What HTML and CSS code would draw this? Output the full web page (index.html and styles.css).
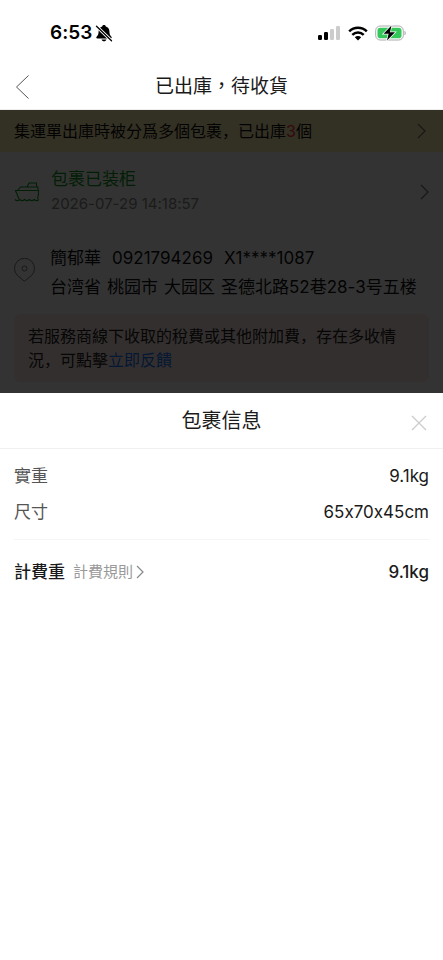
FILE: index.html
```html
<!DOCTYPE html>
<html lang="zh-Hans">
<head>
<meta charset="utf-8">
<meta name="viewport" content="width=device-width, initial-scale=1">
<title>已出庫&#xFF0C;待收貨</title>
<link rel="stylesheet" href="styles.css">
</head>
<body>
<div class="status">
  <div class="clock"><span>6:53</span>
    <svg class="bell" width="18" height="18" viewBox="0 0 18 18" aria-hidden="true">
      <path d="M9 1C8 1 7.300 1.600 7.200 2.400 4.800 3.100 3.600 4.900 3.600 7.200c0 3-.8 4.300-2 5.600-.7.800-.2 1.700.7 1.700h13.400c.9 0 1.400-.9.700-1.700-1.200-1.300-2-2.600-2-5.600 0-2.300-1.200-4.100-3.600-4.800C10.700 1.600 10 1 9 1zM6.500 15.400h5C11.100 16.500 10.200 17.200 9 17.200s-2.100-.7-2.500-1.800z"/>
      <path d="M0 .8 18 18.200" stroke="#fff" stroke-width="3"/>
      <path d="M1.500 2.200 16.500 16.800" stroke="#000" stroke-width="1.300" stroke-linecap="round"/>
    </svg>
  </div>
  <div class="signals">
    <svg width="23" height="15" viewBox="0 0 23 15" aria-hidden="true">
      <rect x="0" y="9" width="4" height="5" rx="1.200"/><rect x="6" y="6" width="4" height="8" rx="1.200"/>
      <g fill="#ccc"><rect x="12" y="3" width="4" height="11" rx="1.200"/><rect x="18" y="0" width="4" height="14" rx="1.200"/></g>
    </svg>
    <svg width="20" height="15" viewBox="0 0 20 15" aria-hidden="true">
      <g fill="none" stroke="#000" stroke-width="2.500"><path d="M1.200 5.400a12.600 12.600 0 0 1 17.600 0"/><path d="M4.300 8.800a8.200 8.200 0 0 1 11.400 0"/></g>
      <path d="M10 14.500 6.800 11.300a4.600 4.600 0 0 1 6.400 0z"/>
    </svg>
    <svg width="32" height="18" viewBox="0 0 32 18" aria-hidden="true">
      <rect x=".7" y="2" width="27.600" height="14" rx="4.500" fill="#fff" stroke="#aaa"/>
      <rect x="2.500" y="3.800" width="24" height="10.400" rx="2.800" fill="#34c759"/>
      <path d="M29.500 6.700c1.700.7 1.700 3.900 0 4.600z" fill="#aaa"/>
      <path d="M16.500 1.500 8.600 9.800h5L12 16.500l8-8.300h-5z" fill="#000" stroke="#fff" stroke-width="1.500" paint-order="stroke"/>
    </svg>
  </div>
</div>
<header class="nav">
  <button class="back" aria-label="返回"><svg width="14" height="24" viewBox="0 0 14 24"><path d="M13.500.5 1.500 12l12 11.500"/></svg></button>
  <h1 lang="zh-Hant">已出庫&#xFF0C;待收貨</h1>
</header>
<main class="page">
  <a class="notice" href="#packages"><span>集運單出庫時被分爲多個包裹&#xFF0C;已出庫<em>3</em>個</span>
    <svg class="chevron" width="9" height="16" viewBox="0 0 9 16"><path d="m1 1 7 7-7 7"/></svg></a>
  <a class="track" href="#tracking">
    <svg class="ship" width="26" height="21" viewBox="0 0 26 21" aria-hidden="true"><path d="M5 18 1.500 9.500h23V13l-1 5M3.500 9.500 6.500 6H24v3.500M13 6l2-4h7.500v4M1 18.500q2.400 2.400 4.800 0 2.400 2.400 4.800 0 2.400 2.400 4.800 0 2.400 2.400 4.800 0 2.400 2.400 4.800 0"/></svg>
    <span class="track-text"><strong>包裹已装柜</strong><time>2026-07-29 14:18:57</time></span>
    <svg class="chevron" width="9" height="16" viewBox="0 0 9 16"><path d="m1 1 7 7-7 7"/></svg>
  </a>
  <section class="address">
    <svg class="pin" width="22" height="24" viewBox="0 0 22 24" aria-hidden="true"><path d="M10.500 23.300 3.500 17.500a10 10 0 1 1 14 0z" stroke-linejoin="round"/><circle cx="10.500" cy="10.500" r="2.500"/></svg>
    <div>
      <p class="person"><span>簡郁華</span><span>0921794269</span><span>X1****1087</span></p>
      <p class="place"><span>台湾省</span><span>桃园市</span><span>大园区</span><span>圣德北路52巷28-3号五楼</span></p>
    </div>
  </section>
  <p class="tip">若服務商線下收取的稅費或其他附加費&#xFF0C;存在多收情況&#xFF0C;可點擊<a href="#feedback">立即反饋</a></p>
</main>
<section class="sheet">
  <header class="sheet-head"><h2>包裹信息</h2>
    <button class="close" aria-label="關閉"><svg width="16" height="16" viewBox="0 0 16 16"><path d="m1 1 14 14M15 1 1 15"/></svg></button></header>
  <dl class="facts">
    <div><dt>實重</dt><dd>9.1kg</dd></div>
    <div><dt>尺寸</dt><dd>65x70x45cm</dd></div>
  </dl>
  <dl class="billing"><div><dt>計費重 <a href="#rules">計費規則<svg width="8" height="14" viewBox="0 0 8 14"><path d="m1 1 6 6-6 6"/></svg></a></dt><dd>9.1kg</dd></div></dl>
</section>
</body>
</html>
```
FILE: styles.css
```css
* { box-sizing: border-box; }
body, h1, h2, p, dl, dd { margin: 0; }
body {
  min-height: 100vh;
  background: #fff;
  color: #1a1a1a;
  font-family: Inter, "Noto Sans CJK SC", sans-serif;
  font-size: 17px;
  line-height: 24px;
  font-variant-ligatures: no-contextual;
}
a { color: inherit; text-decoration: none; }
button { border: 0; padding: 0; background: none; display: flex; }
svg { flex: none; }

.status {
  display: flex;
  justify-content: space-between;
  align-items: center;
  height: 64px;
  padding: 20px 36px 18px 50px;
}
.clock { display: flex; align-items: center; gap: 3px; font-size: 19px; font-weight: 600; color: #000; }
.signals { display: flex; align-items: center; gap: 7px; }

.nav {
  display: grid;
  grid-template-columns: 32px 1fr 32px;
  align-items: center;
  height: 46px;
  padding: 0 15px;
  border-bottom: 1px solid #eee;
}
.nav h1 { font-size: 19px; font-weight: 400; text-align: center; font-family: Inter, "Noto Sans CJK TC", sans-serif; }
.nav path { fill: none; stroke: #555; stroke-width: 1; }

.page { position: relative; padding-bottom: 11px; }
.page::after { content: ""; position: absolute; inset: 0; background: rgba(0, 0, 0, 0.8); pointer-events: none; }
.chevron { fill: none; stroke: #777; stroke-width: 1.3; }
.notice {
  display: flex;
  justify-content: space-between;
  align-items: center;
  height: 42px;
  padding: 0 17px 0 14px;
  background: #fff0b4;
  font-size: 16px;
  color: #111;
}
.notice em { color: #f33; font-style: normal; }
.track { display: flex; align-items: center; padding: 15px 14px 12px; }
.ship { fill: none; stroke: #0a9b20; stroke-width: 1.1; margin-right: 11px; }
.track-text { flex: 1; display: flex; flex-direction: column; gap: 1px; }
.track-text strong { font-weight: 400; color: #0a9b20; }
.track-text time { font-size: 15px; color: #888; }
.address { display: flex; align-items: center; padding: 16px 14px 12px; }
.address p { display: flex; line-height: 29px; color: #111; }
.person { gap: 11px; }
.place { gap: 6px; }
.pin { fill: none; stroke: #777; stroke-width: 1; margin: 0 14px 6px 0; }
.tip {
  margin: 0 14px;
  padding: 10px 20px 10px 14px;
  border-radius: 6px;
  background: #ffebe6;
  font-size: 16px;
  color: #222;
}
.tip a { color: #1677ff; }

.sheet-head {
  display: grid;
  grid-template-columns: 32px 1fr 32px;
  align-items: center;
  height: 56px;
  padding: 0 16px;
  border-bottom: 1px solid #f0f0f0;
}
.sheet-head h2 { grid-column: 2; font-size: 20px; font-weight: 400; text-align: center; }
.close { justify-self: end; margin-top: 4px; }
.close path { stroke: #ccc; stroke-width: 1.3; }
.facts { display: grid; gap: 12px; margin: 0 14px; padding: 15px 0; border-bottom: 1px solid #f5f5f5; }
.facts div, .billing div { display: flex; justify-content: space-between; align-items: center; }
.facts dt { color: #555; }
.billing { padding: 20px 14px; font-weight: 500; }
.billing dt { display: flex; align-items: center; gap: 8px; }
.billing a { display: flex; align-items: center; gap: 3px; font-size: 15px; font-weight: 400; color: #999; }
.billing path { fill: none; stroke: #888; stroke-width: 1.2; }
```
